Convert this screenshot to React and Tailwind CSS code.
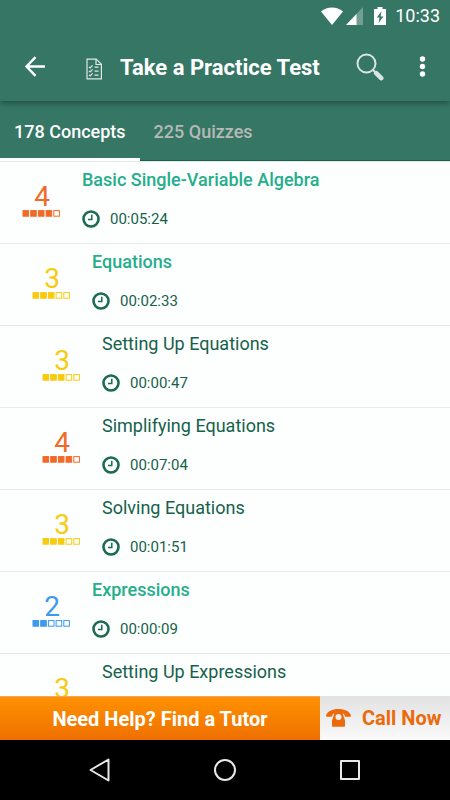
import React, { useState } from "react";

const concepts = [
  { name: "Basic Single-Variable Algebra", time: "00:05:24", score: 4, level: 0 },
  { name: "Equations", time: "00:02:33", score: 3, level: 1 },
  { name: "Setting Up Equations", time: "00:00:47", score: 3, level: 2 },
  { name: "Simplifying Equations", time: "00:07:04", score: 4, level: 2 },
  { name: "Solving Equations", time: "00:01:51", score: 3, level: 2 },
  { name: "Expressions", time: "00:00:09", score: 2, level: 1 },
  { name: "Setting Up Expressions", score: 3, level: 2 },
];

const scoreColors = {
  2: "text-[#3d98f0]",
  3: "text-[#f8cb10]",
  4: "text-[#f06a28]",
};

const indents = ["pl-[22px]", "pl-[32px]", "pl-[42px]"];

const StatusBar = () => (
  <div className="relative z-20 flex h-8 items-center justify-end bg-[#357664] pr-[10px] text-white">
    <svg className="h-[18px] w-[22px]" viewBox="0 0 22 18" fill="currentColor">
      <path d="M0 4.5C3 2 7 .6 11 .6S19 2 22 4.5L11 18z" />
    </svg>
    <svg className="ml-[3px] h-[18px] w-[17px]" viewBox="0 0 17 18" fill="currentColor">
      <path d="M17 0v18H0z" opacity=".3" />
      <path d="M10.5 7v11H0z" />
    </svg>
    <svg className="ml-[11px] h-[18px] w-[12px]" viewBox="0 0 12 18" fill="currentColor">
      <path
        fillRule="evenodd"
        d="M3.5 0h5v2H12v16H0V2h3.5zM7.5 4.2L2.8 10.6h2.7L4.6 16l4.8-6.6H6.6z"
      />
    </svg>
    <span className="ml-[9px] text-lg leading-5">10:33</span>
  </div>
);

const TopBar = () => (
  <div className="relative z-10 flex h-[69px] items-center bg-[#357664] pl-6 pr-[14px] text-white shadow-[0_2px_6px_rgba(0,0,0,0.35)]">
    <button aria-label="Back" className="h-[22px] w-[22px]">
      <svg viewBox="0 0 22 22" fill="none" stroke="currentColor" strokeWidth="2.4">
        <path d="M11.5 1.2L2.5 10.5l9 9.3M2.2 10.5H21" />
      </svg>
    </button>
    <svg
      className="ml-[39px] mt-[4px] h-[22px] w-[18px] shrink-0"
      viewBox="0 0 18 22"
      fill="none"
      stroke="#dfe9e5"
      strokeWidth="1.2"
    >
      <path d="M2 1.1h9.2l5.2 5.2v14.6H2z" />
      <path d="M11 1.3v5.2h5.2" />
      <path d="M4 8.8l1.2 1.2 2.4-2.6M4 12.8l1.2 1.2 2.4-2.6M4 16.8l1.2 1.2 2.4-2.6M9.5 9.2h4M9.5 13.2h4M9.5 17.2h4" />
    </svg>
    <h1 className="ml-[17px] flex-1 whitespace-nowrap pt-[2px] text-[22px] font-bold leading-7">
      Take a Practice Test
    </h1>
    <button aria-label="Search" className="h-7 w-7">
      <svg viewBox="0 0 28 28" fill="none" stroke="#d9e5e1">
        <circle cx="10.5" cy="10.5" r="9" strokeWidth="2" />
        <path d="M17 17l3 3" strokeWidth="2" />
        <path d="M20.2 20.2l5 5" strokeWidth="4.6" strokeLinecap="round" />
      </svg>
    </button>
    <button aria-label="More options" className="ml-[26px] h-[26px] w-[26px]">
      <svg viewBox="0 0 26 26" fill="currentColor">
        <circle cx="12.5" cy="5" r="2.7" />
        <circle cx="12.5" cy="12.5" r="2.7" />
        <circle cx="12.5" cy="20" r="2.7" />
      </svg>
    </button>
  </div>
);

const Tabs = ({ active, onChange }) => (
  <div className="flex h-[60px] border-b border-[#17604a] bg-[#357664] text-lg font-medium leading-6">
    {["178 Concepts", "225 Quizzes"].map((tab, i) => (
      <button
        key={tab}
        onClick={() => onChange(i)}
        className={`-mb-px border-b-3 px-[14px] pt-1 ${
          active === i ? "border-white text-white" : "border-transparent text-[#b5b9b8]"
        }`}
      >
        {tab}
      </button>
    ))}
  </div>
);

const Score = ({ value }) => (
  <div className={`flex w-[38px] flex-col items-center ${scoreColors[value]}`}>
    <span className="pl-[2px] text-[28px] leading-6">{value}</span>
    <svg className="mt-px h-[7px] w-[38px]" viewBox="0 0 38 7" stroke="currentColor">
      {[0, 1, 2, 3, 4].map((i) => (
        <rect
          key={i}
          x={1 + i * 7.7}
          y="0.6"
          width="5.6"
          height="5.6"
          fill={i < value ? "currentColor" : "none"}
        />
      ))}
    </svg>
  </div>
);

const ConceptRow = ({ concept }) => (
  <li className={`flex h-[82px] shrink-0 border-t border-[#e6eaea] ${indents[concept.level]}`}>
    <div className="pt-[23px]">
      <Score value={concept.score} />
    </div>
    <div className="ml-[22px] pt-[6px]">
      <h2
        className={`text-lg leading-6 ${
          concept.level < 2 ? "font-medium text-[#26ad8b]" : "text-[#16614a]"
        }`}
      >
        {concept.name}
      </h2>
      {concept.time && (
        <div className="mt-[15px] flex items-center text-[15px] leading-6 text-[#16614a]">
          <svg className="mr-[10px] h-[18px] w-[18px]" viewBox="0 0 18 18" fill="none" stroke="#1b6a52">
            <circle cx="9" cy="9" r="7.5" strokeWidth="2.6" />
            <path d="M9.8 4.8v4.8H6" strokeWidth="1.5" />
          </svg>
          {concept.time}
        </div>
      )}
    </div>
  </li>
);

const HelpBar = () => (
  <div className="flex h-11 shrink-0 text-xl font-bold">
    <button className="flex-1 border-t border-[#f3a566] bg-linear-to-b from-[#ff9100] to-[#ee7000] text-white">
      Need Help? Find a Tutor
    </button>
    <button className="flex w-[130px] items-center bg-linear-to-b from-[#e2e2e2] to-[#fafafa] pl-[6px] text-[#eb6a0c]">
      <svg className="mr-[11px] h-[18px] w-[25px] shrink-0" viewBox="0 0 25 18" fill="currentColor">
        <path d="M0 6.5C1.5 2.2 6 0 12.500 0S23.500 2.200 25 6.500Q25 7.800 24 7.800H19.800Q18.800 7.800 18.600 6.500C18.200 4.800 17 4.300 15 4.100H10C8 4.300 6.800 4.800 6.400 6.500Q6.200 7.800 5.200 7.800H1Q0 7.800 0 6.500z" />
        <path
          fillRule="evenodd"
          d="M8.500 3.500h8l1.300 4.500l1.200 3.200V17q0 .8-.8.8H6.800q-.8 0-.8-.8v-5.800l1.200-3.200zM12.500 5a3 3 0 1 0 0 6a3 3 0 0 0 0-6z"
        />
      </svg>
      <span className="whitespace-nowrap">Call Now</span>
    </button>
  </div>
);

const SystemNav = () => (
  <nav className="grid h-[60px] shrink-0 grid-cols-3 items-center justify-items-center bg-black px-[37px] text-[#e8e8e8]">
    <button aria-label="System back" className="h-6 w-6">
      <svg viewBox="0 0 24 24" fill="none" stroke="currentColor" strokeWidth="2" strokeLinejoin="round">
        <path d="M20.500 1.500v21L2.500 12z" />
      </svg>
    </button>
    <button aria-label="Home" className="h-6 w-6">
      <svg viewBox="0 0 24 24" fill="none" stroke="currentColor" strokeWidth="2">
        <circle cx="12" cy="12" r="10" />
      </svg>
    </button>
    <button aria-label="Recent apps" className="h-6 w-6">
      <svg viewBox="0 0 24 24" fill="none" stroke="currentColor" strokeWidth="2" strokeLinejoin="round">
        <rect x="3" y="3" width="18" height="18" />
      </svg>
    </button>
  </nav>
);

const App = () => {
  const [activeTab, setActiveTab] = useState(0);

  return (
    <div className="flex h-screen flex-col bg-[#fcfffe] font-[Roboto,sans-serif]">
      <header className="shrink-0 bg-[#357664]">
        <StatusBar />
        <TopBar />
        <Tabs active={activeTab} onChange={setActiveTab} />
      </header>

      <ul className="flex min-h-0 flex-1 flex-col overflow-hidden">
        {concepts.map((concept) => (
          <ConceptRow key={concept.name} concept={concept} />
        ))}
      </ul>

      <HelpBar />
      <SystemNav />
    </div>
  );
};

export default App;
